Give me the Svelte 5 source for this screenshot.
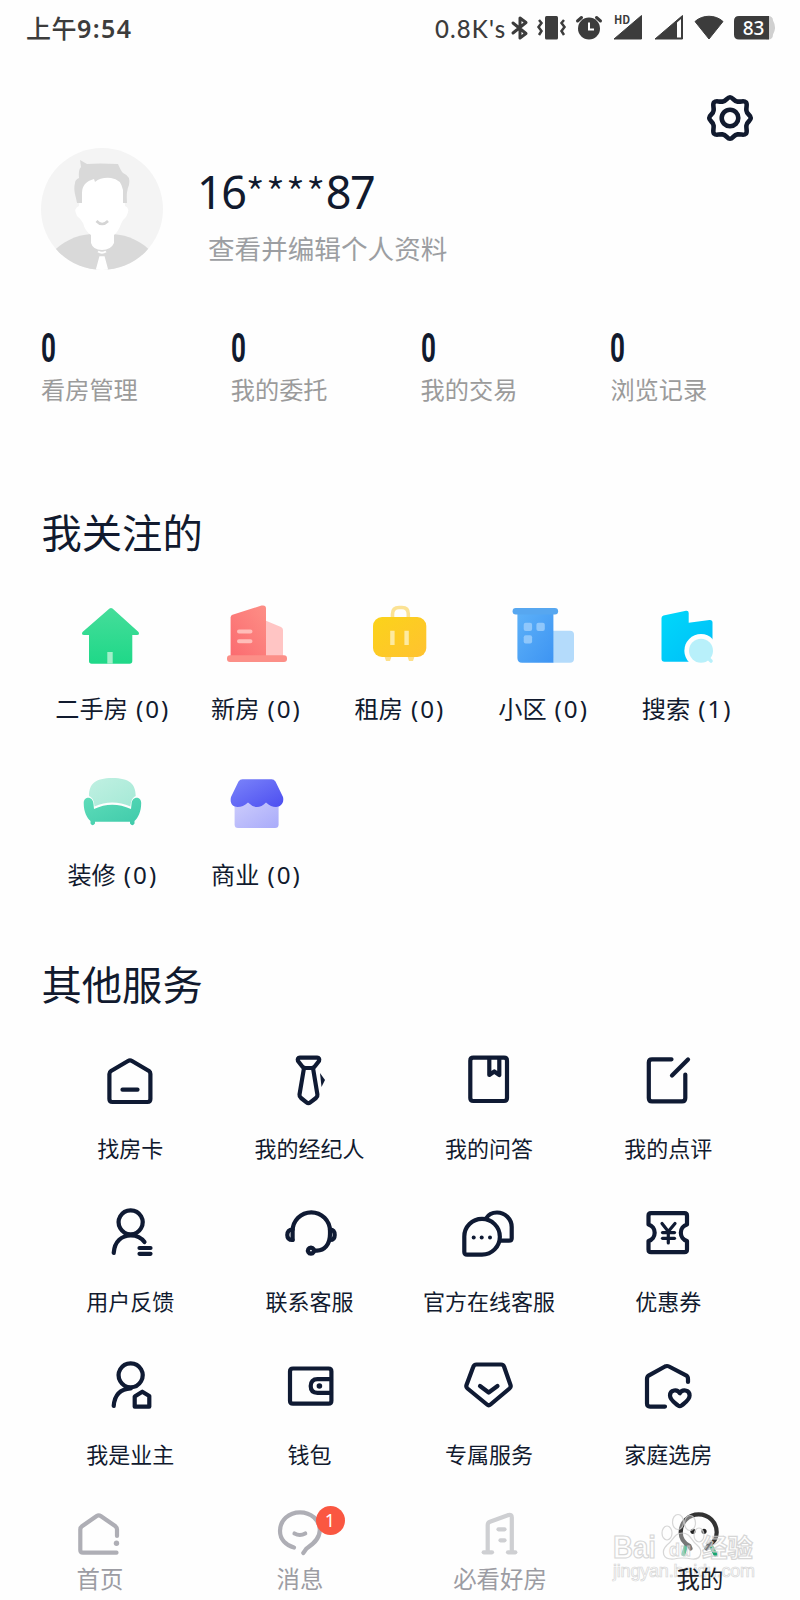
<script>
    const stats = [
        { count: 0, label: '看房管理' },
        { count: 0, label: '我的委托' },
        { count: 0, label: '我的交易' },
        { count: 0, label: '浏览记录' }
    ];

    const follows = [
        { icon: 'house', label: '二手房', count: 0 },
        { icon: 'tower', label: '新房', count: 0 },
        { icon: 'suitcase', label: '租房', count: 0 },
        { icon: 'block', label: '小区', count: 0 },
        { icon: 'search', label: '搜索', count: 1 },
        { icon: 'sofa', label: '装修', count: 0 },
        { icon: 'shop', label: '商业', count: 0 }
    ];

    // line icons on a 60x60 board, dots are [cx, cy, r]
    const services = [
        {
            label: '找房卡',
            paths: ['M11 20 L28 10 Q30 8.800 32 10 L49 20 Q50.400 21 50.400 23 V48 Q50.400 51 47.400 51 H12.400 Q9.400 51 9.400 48 V23 Q9.400 21 11 20 Z', 'M22.500 38.700 H37.500']
        },
        {
            label: '我的经纪人',
            paths: ['M20 6.700 H37 Q40 7 39 10 L35.500 14.500 Q34 17 31.500 17 H25.500 Q23 17 21.500 14.500 L18 10 Q17 7 20 6.700 Z', 'M24 17 L19.500 43.500 Q19.300 45.500 21 47 L26.500 51.300 Q28.400 52.800 30.300 51.300 L36 47 Q37.700 45.500 37.400 43.500 L33 17'],
            fill: 'M40 22 L45 29 L41.500 36 Z'
        },
        {
            label: '我的问答',
            paths: ['M14.300 6.700 H45 Q48 6.700 48 9.700 V47 Q48 50 45 50 H14.300 Q11.300 50 11.300 47 V9.700 Q11.300 6.700 14.300 6.700 Z', 'M30.300 7 V24 L35.300 20.500 L40.300 24 V7']
        },
        {
            label: '我的点评',
            paths: ['M33.500 8.300 H14 Q10.800 8.300 10.800 11.500 V47 Q10.800 50.400 14 50.400 H44 Q47.300 50.400 47.300 47 V23.500', 'M50 8.500 L34 24.500']
        },
        {
            label: '用户反馈',
            paths: ['M30.700 6.300 A12 12 0 1 1 30.600 6.300 Z', 'M13.700 49 C14.500 37 22 31.500 30.700 31.500 C37 31.500 42 34.500 44.500 38', 'M39.500 44 H50.500', 'M39.500 49.800 H50.500']
        },
        {
            label: '联系客服',
            paths: ['M12.600 36 V27 A18.700 18.700 0 0 1 50 27 V30 C50 41 44 46.500 37 46.600 H34.500', 'M12.600 25.500 Q7.300 25.500 7.300 31 Q7.300 36 12.600 36', 'M50 25.500 Q54.700 25.500 54.700 31 Q54.700 36 50 36', 'M31 43.600 A3 3 0 1 1 30.900 43.600 Z']
        },
        {
            label: '官方在线客服',
            paths: ['M23 14.900 A17.700 17.700 0 0 1 23 50.600 H8 Q5.300 50.600 5.300 48 V32.600 A17.700 17.700 0 0 1 23 14.900 Z', 'M27 14.500 C29 11 33.500 8.500 38 8.500 C46 8.500 52.700 15 52.700 23 V34.200 Q52.700 36.700 50 36.700 H42'],
            dots: [[14.7, 33.6, 2], [22.7, 33.6, 2], [31, 33.6, 2]]
        },
        {
            label: '优惠券',
            paths: ['M13 9.200 H46.500 Q49 9.200 49 11.700 V20.500 A8.600 8.600 0 0 0 49 37 V45.500 Q49 48.200 46.500 48.200 H13 Q10.500 48.200 10.500 45.500 V37 A8.600 8.600 0 0 0 10.500 20.500 V11.700 Q10.500 9.200 13 9.200 Z'],
            thin: ['M24 19.500 L30.300 27.500 L37 19.500', 'M30.300 27.500 V39', 'M24.500 28.600 H36.500', 'M24.500 34.300 H36.500']
        },
        {
            label: '我是业主',
            paths: ['M30.700 6.300 A12 12 0 1 1 30.600 6.300 Z', 'M13.700 49 C14.500 38.500 20 32 30.700 31.500', 'M35.500 39 L42.300 34.700 L49.300 39 V49.700 H34.700 V39.600 Z']
        },
        {
            label: '钱包',
            paths: ['M13 11.500 H48.500 Q51.400 11.500 51.400 14.500 V43.700 Q51.400 46.700 48.500 46.700 H13 Q10 46.700 10 43.700 V14.500 Q10 11.500 13 11.500 Z', 'M51 22.200 H37.500 Q30.700 22.200 30.700 29 Q30.700 35.800 37.500 35.800 H51'],
            dots: [[39.4, 29, 2.8]]
        },
        {
            label: '专属服务',
            paths: ['M17.500 7.500 H42 Q44.500 7.500 45.200 10 L51.500 28 Q52.200 30 50.500 31.500 L31.500 47.500 Q29.700 49 28 47.500 L8.500 31.500 Q6.800 30 7.500 28 L14.200 10 Q15 7.500 17.500 7.500 Z', 'M21 29 L29.700 35.500 L38.500 29']
        },
        {
            label: '家庭选房',
            paths: ['M50 25 V22 Q50 19.500 48 18.300 L31 9.500 Q29 8.500 27 9.500 L11 18.300 Q9 19.500 9 22 V46.600 Q9 49.600 12 49.600 H27', 'M41.800 36.200 C39.500 32 32 32.500 32 38.500 C32 43 37 46 40 48.500 Q41.800 49.600 43.600 48.500 C46.600 46 51.600 43 51.600 38.500 C51.600 32.500 44 32 41.800 36.200 Z']
        }
    ];

    const tabs = [
        {
            label: '首页',
            tone: 'idle',
            paths: ['M42 26 V19.500 Q42 17.500 40.500 16.300 L25.700 6 Q23.700 4.700 21.700 6 L7 16.300 Q5.300 17.500 5.300 19.500 V40 Q5.300 42.700 8 42.700 H41.500'],
            dots: [[41.5, 33.3, 2.7]]
        },
        {
            label: '消息',
            tone: 'idle',
            badge: 1,
            paths: ['M19 37.500 C11 35.500 5 29.500 5 21 C5 10 14 2.300 25 2.300 C36 2.300 44.800 10 44.800 20 C44.800 30 36 35.500 31.500 38.500 L28.300 43', 'M19.500 23.500 Q24.800 26.500 30.200 23.500']
        },
        {
            label: '必看好房',
            tone: 'light',
            paths: ['M8.700 42.300 H17', 'M12.700 42 V15 Q12.700 12.500 15 11.700 L33.500 5 Q36.800 4.300 36.800 7.500 V42', 'M33 42.300 H40.300', 'M23.500 19.300 H29.500', 'M25.500 30.300 H29.500']
        },
        {
            label: '我的',
            tone: 'active',
            paths: ['M15.500 38.500 L14.500 36 C8.500 33 5.700 28 5.700 22.300 A18 18 0 0 1 41.700 22.300 C41.700 28 39 33 33 36 L31.500 38.500'],
            green: ['M10.500 37 L8.500 44', 'M36.500 37 L40.500 44.500'],
            dots: [[18, 21.3, 2.6], [29, 21.3, 2.6]]
        }
    ];
</script>

{#snippet followIcon(name)}
    <svg class="follow-icon" viewBox="0 0 64 64">
        {#if name === 'house'}
            <path d="M28.500 4.600 Q30 3.400 31.500 4.600 L57.500 28 Q59 30.800 56 31 H51.300 V57 Q51.300 59.700 48.600 59.700 H10.700 Q8 59.700 8 57 V31 H3 Q0 30.800 1.500 28 Z" fill="url(#g-green)" />
            <path d="M26.300 48 H31.700 V59.700 H26.300 Z" fill="#a2efc9" />
        {:else if name === 'tower'}
            <path d="M42 16.700 L57 23 Q59 24 59 26 V52 H42 Z" fill="#ffc5c4" />
            <path d="M6.600 52 V13.500 Q6.600 11.500 8.500 10.800 L37.500 1.600 Q42 .6 42 4.600 V52 Z" fill="url(#g-red)" />
            <rect x="3" y="51.300" width="60" height="6.600" rx="3" fill="#fc8f88" />
            <path d="M15 27.500 H26.500 M15 37.200 H26.500" stroke="#ffbdb9" stroke-width="4" stroke-linecap="round" />
        {:else if name === 'suitcase'}
            <path d="M24.500 14 V10 Q24.500 3.500 31 3.500 H34 Q40.300 3.500 40.300 10 V14" fill="none" stroke="#fbe294" stroke-width="3.600" />
            <path d="M16 51 H24 L22 57 H18 Z M39 51 H47 L45 57 H41 Z" fill="#fde08a" />
            <rect x="5" y="13" width="53.300" height="40" rx="9" fill="url(#g-yellow)" />
            <path d="M24.400 26.700 V41 M38.600 26.700 V41" stroke="#fdeaa0" stroke-width="4.400" />
        {:else if name === 'block'}
            <path d="M41 26.700 H58 Q62 26.700 62 30.500 V55 Q62 58.700 58 58.700 H41 Z" fill="#b4dbfb" />
            <path d="M5.400 8 H41.400 V58.700 H10 Q5.400 58.700 5.400 54 Z" fill="url(#g-blue)" />
            <rect x=".6" y="4" width="45.500" height="6.400" rx="3.200" fill="#57a7f0" />
            <g fill="#8fc7fb">
                <rect x="11.700" y="18.700" width="8.400" height="8.200" rx="2" />
                <rect x="24.400" y="18.700" width="8.400" height="8.200" rx="2" />
                <rect x="11.700" y="31.300" width="8.400" height="8.200" rx="2" />
            </g>
        {:else if name === 'search'}
            <path d="M6.500 14 Q6.500 12 8.500 11.400 L31 6.800 Q33.700 6.500 33.700 9 V18.700 L54.500 16 Q57.500 15.800 57.500 18.500 V57.700 H9.500 Q6.500 57.700 6.500 54.700 Z" fill="url(#g-cyan)" />
            <path d="M46 30 A16.600 16.600 0 1 0 46 63.300 H60 V38 L57.500 35 Q53 30 46 30 Z" fill="#fefefe" />
            <circle cx="46" cy="46.700" r="12" fill="#b8f0fa" />
            <path d="M52 53 L56 57" stroke="#b8f0fa" stroke-width="3.600" stroke-linecap="round" />
        {:else if name === 'sofa'}
            <path d="M8 26 C8 14 14 8 31.300 8 C48.600 8 54.700 14 54.700 26 C51 28 50 31 49.500 36.500 Q31 28.500 13.500 36.500 C13 31 12 28 8 26 Z" fill="url(#g-mint)" />
            <path d="M2.700 33 C2.700 26 12 25.500 12.500 34 L13 39 Q31 30.500 50 39 L50.500 34 C51 25.500 60.200 26 60.200 33 C60.200 42 57 48 53.500 51 V53.500 Q51.500 57 49 53.500 V51.700 H14 V53.500 Q11.500 57 9.500 53.500 V51 C6 48 2.700 42 2.700 33 Z" fill="url(#g-teal)" />
        {:else if name === 'shop'}
            <path d="M10.600 30 H54.600 V54.500 Q54.600 58 51 58 H14 Q10.600 58 10.600 54.500 Z" fill="url(#g-lilac)" />
            <path d="M18.500 9.300 H47.500 Q50 9.300 51.500 11.500 L59 27 C60.500 34 56 37 52 37 Q47 37 42 32.500 Q37.500 37 33 37 Q28.500 37 24 32.500 Q19 37 13.500 37 C9 37 5.500 34 7 27 L14.500 11.500 Q16 9.300 18.500 9.300 Z" fill="url(#g-violet)" />
        {/if}
    </svg>
{/snippet}

<!-- gradients shared by the coloured icons -->
<svg class="defs" width="0" height="0">
    <defs>
        <linearGradient id="g-green" x1="0" y1="0" x2="0" y2="1"><stop offset="0" stop-color="#45dd9a" /><stop offset="1" stop-color="#1fd888" /></linearGradient>
        <linearGradient id="g-red" x1="1" y1="0" x2="0" y2="1"><stop offset="0" stop-color="#fd8f86" /><stop offset="1" stop-color="#fb6b70" /></linearGradient>
        <linearGradient id="g-yellow" x1="0" y1="0" x2="1" y2="1"><stop offset="0" stop-color="#fbd31a" /><stop offset="1" stop-color="#ffc230" /></linearGradient>
        <linearGradient id="g-blue" x1="0" y1="0" x2="1" y2="1"><stop offset="0" stop-color="#5db1f8" /><stop offset="1" stop-color="#3d94f3" /></linearGradient>
        <linearGradient id="g-cyan" x1="0" y1="0" x2="1" y2="1"><stop offset="0" stop-color="#00d8fa" /><stop offset="1" stop-color="#00bdf8" /></linearGradient>
        <linearGradient id="g-mint" x1="0" y1="0" x2="1" y2="1"><stop offset="0" stop-color="#c0f0e2" /><stop offset="1" stop-color="#a5e9d6" /></linearGradient>
        <linearGradient id="g-teal" x1="0" y1="0" x2="1" y2="1"><stop offset="0" stop-color="#5edcb9" /><stop offset="1" stop-color="#3fcaaa" /></linearGradient>
        <linearGradient id="g-lilac" x1="0" y1="0" x2="1" y2="1"><stop offset="0" stop-color="#cdcdfc" /><stop offset="1" stop-color="#a9abfa" /></linearGradient>
        <linearGradient id="g-violet" x1="0" y1="0" x2="1" y2="1"><stop offset="0" stop-color="#7b84fa" /><stop offset="1" stop-color="#4c4ef0" /></linearGradient>
    </defs>
</svg>

<div class="screen">
    <header class="status">
        <span class="time">上午<span class="clock">9:54</span></span>
        <span class="speed">0.8K's</span>
        <svg class="status-icons" viewBox="0 0 268 28">
            <path d="M3 9 L16 19.500 L10 24 V4 L16 8.500 L3 19" fill="none" stroke="#3c3c3c" stroke-width="3" stroke-linejoin="round" stroke-linecap="round" />
            <rect x="35" y="2" width="13" height="23.500" rx="1.500" fill="#3c3c3c" />
            <path d="M29 6 L31.500 9 L28.500 13 L31.500 17 L29 21 M54 6 L51.500 9 L54.500 13 L51.500 17 L54 21" fill="none" stroke="#3c3c3c" stroke-width="2.500" />
            <circle cx="79" cy="14.500" r="11" fill="#3c3c3c" />
            <path d="M67.500 7 L71.500 3.500 M86.500 3.500 L90.500 7" stroke="#3c3c3c" stroke-width="3" stroke-linecap="round" />
            <path d="M79 8.500 V15.500 H84" fill="none" stroke="#fff" stroke-width="2" />
            <path d="M104 25 L131.500 1.500 V25 Z" fill="#3c3c3c" stroke="#3c3c3c" stroke-linejoin="round" />
            <text x="104" y="9.500" font-size="11" font-weight="700" fill="#3c3c3c">HD</text>
            <path d="M145 25 L172.500 1.500 V25 Z" fill="#3c3c3c" stroke="#3c3c3c" stroke-linejoin="round" />
            <path d="M167 8.500 L171 5 V23.500 H167 Z" fill="#fff" />
            <path d="M185 7.500 C192.500 .5 205.500 .5 213 7.500 L199 25 Z" fill="#3c3c3c" stroke="#3c3c3c" stroke-linejoin="round" />
            <path d="M256 2 H258 Q263 2 263 6.500 Q267 13.500 263 20.500 Q263 25.500 258 25.500 H256 Z" fill="#d0d0d0" />
            <path d="M229 2 H259 V25.500 H229 Q224 25.500 224 20.500 V7 Q224 2 229 2 Z" fill="#3c3c3c" />
            <text class="level" x="243.500" y="20.500" font-size="19" font-weight="500" text-anchor="middle" fill="#fff">83</text>
        </svg>
    </header>

    <div class="toolbar">
        <svg class="gear" viewBox="0 0 48 48">
            <path d="M24 3.200 C27 3.200 27.500 7.200 31.500 7.600 C35.500 8 38 6.200 39.800 8.200 C41.800 10 40 12.500 40.400 16.500 C40.800 20.500 44.800 21 44.800 24 C44.800 27 40.800 27.500 40.400 31.500 C40 35.500 41.800 38 39.800 39.800 C38 41.800 35.500 40 31.500 40.400 C27.500 40.800 27 44.800 24 44.800 C21 44.800 20.500 40.800 16.500 40.400 C12.500 40 10 41.800 8.200 39.800 C6.200 38 8 35.500 7.600 31.500 C7.200 27.500 3.200 27 3.200 24 C3.200 21 7.200 20.500 7.600 16.500 C8 12.500 6.200 10 8.200 8.200 C10 6.200 12.500 8 16.500 7.600 C20.500 7.200 21 3.200 24 3.200 Z" />
            <circle cx="24" cy="24" r="8.300" />
        </svg>
    </div>

    <section class="profile">
        <svg class="avatar" viewBox="0 0 122 122">
            <clipPath id="avatar-clip"><circle cx="61" cy="61" r="61" /></clipPath>
            <g clip-path="url(#avatar-clip)">
                <rect width="122" height="122" fill="#f4f4f4" />
                <path d="M10 106 C20 94 35 87 50 86 H72 C87 87 103 94 112 106 V122 H10 Z" fill="#d9d9d9" />
                <path d="M40 32 Q60 20 82 32 L84 58 Q90 60 85 69 Q81 72 80 76 Q77 84 73 87 V95 Q70 102 61 102 Q52 102 50 95 V87 Q44 83 42 75 Q40 71 36 68 Q32 60 38 58 Z" fill="#fff" />
                <path d="M36 55 C35 48 32 43 34 35 Q34 32 38 30 Q37 22 40 19 L39 12 L46 16 Q58 15 77 16 Q80 23 82 25 Q90 28 88 37 Q85 43 86 55 H82 V42 Q80 31 70 30 Q60 29 54 34 L53 31 Q41 34 41 45 V55 Z" fill="#d9d9d9" />
                <path d="M55.500 73 Q61 79 67 73" fill="none" stroke="#d5d5d5" stroke-width="2.600" />
                <path d="M57 103.500 Q61 106 65 103.500" fill="none" stroke="#fff" stroke-width="2" />
                <path d="M55.500 122 L59 109 H63 L66.500 122 Z" fill="#fff" stroke="#fff" stroke-width="1.500" />
            </g>
        </svg>
        <div class="who">
            <div class="name"><span class="digits">16</span><span class="stars">****</span><span class="digits">87</span></div>
            <div class="edit">查看并编辑个人资料</div>
        </div>
    </section>

    <section class="stats">
        {#each stats as s}
            <div class="stat">
                <span class="num">{s.count}</span>
                <span class="stat-label">{s.label}</span>
            </div>
        {/each}
    </section>

    <h2 class="follow-title">我关注的</h2>
    <section class="follows">
        {#each follows as f}
            <div class="follow">
                {@render followIcon(f.icon)}
                <div class="follow-label">{f.label}<span class="count">({f.count})</span></div>
            </div>
        {/each}
    </section>

    <h2 class="service-title">其他服务</h2>
    <section class="services">
        {#each services as s}
            <div class="service">
                <svg class="line-icon" viewBox="0 0 60 60">
                    {#each s.paths as d}
                        <path {d} />
                    {/each}
                    {#each s.thin ?? [] as d}
                        <path class="thin" {d} />
                    {/each}
                    {#if s.fill}
                        <path class="solid" d={s.fill} />
                    {/if}
                    {#each s.dots ?? [] as [cx, cy, r]}
                        <circle class="solid" {cx} {cy} {r} />
                    {/each}
                </svg>
                <div class="service-label">{s.label}</div>
            </div>
        {/each}
    </section>

    <nav class="tabs">
        {#each tabs as t}
            <div class="tab {t.tone}">
                <div class="tab-icon">
                    <svg viewBox="0 0 50 50">
                        {#each t.green ?? [] as d}
                            <path class="green" {d} />
                        {/each}
                        {#each t.paths as d}
                            <path {d} />
                        {/each}
                        {#each t.dots ?? [] as [cx, cy, r]}
                            <circle class="solid" {cx} {cy} {r} />
                        {/each}
                    </svg>
                    {#if t.badge}
                        <span class="badge">{t.badge}</span>
                    {/if}
                </div>
                <div class="tab-label">{t.label}</div>
            </div>
        {/each}
    </nav>

    <svg class="watermark" viewBox="0 0 160 80">
        <g fill="#fff" fill-opacity=".4" stroke="#d0d0d0" stroke-width="1.200">
            <text class="wm-latin" x="13" y="48" font-size="31" font-weight="700" textLength="43" lengthAdjust="spacingAndGlyphs">Bai</text>
            <ellipse cx="67" cy="23" rx="5" ry="7" />
            <ellipse cx="78" cy="12" rx="5.500" ry="7.500" />
            <ellipse cx="90" cy="13" rx="5.500" ry="7.500" />
            <ellipse cx="99" cy="25" rx="5" ry="7" />
            <path d="M82 23 C91 23 91 31 97 35 C103 40 102 50 92 49 Q82 47 74 49 C62 50 61 41 67 35 C73 31 74 23 82 23 Z" />
            <text class="wm-latin" x="69" y="46" font-size="18" font-weight="700" stroke-width=".8">du</text>
            <text x="102" y="47" font-size="25.500" font-weight="700">经验</text>
            <text class="wm-latin" x="13" y="67" font-size="18" stroke-width=".7" textLength="142">jingyan.baidu.com</text>
        </g>
    </svg>
</div>

<style>
    :global(body) {
        background: #fefefe;
    }

    .screen {
        position: relative;
        width: 800px;
        height: 1600px;
        overflow: hidden;
        color: #111a2e;
        font-family: "Noto Sans CJK SC", sans-serif;
    }

    .defs {
        display: block;
    }

    .status {
        display: flex;
        align-items: center;
        height: 56px;
        padding: 0 22px 0 26px;
        color: #3c3c3c;
    }

    .time {
        flex: 1;
        font-size: 25px;
        font-weight: 500;
        line-height: 34px;
        padding-bottom: 2px;
        letter-spacing: 0.5px;
    }

    .clock {
        font-family: "Noto Sans", sans-serif;
        font-weight: 600;
        letter-spacing: 1.4px;
    }

    .speed {
        width: 75px;
        font-family: Lato, sans-serif;
        font-size: 24px;
        font-weight: 500;
        letter-spacing: 1.1px;
        white-space: nowrap;
    }

    .status-icons {
        width: 268px;
        height: 28px;
        overflow: visible;
    }

    .level {
        font-family: "Noto Sans", sans-serif;
    }

    .toolbar {
        display: flex;
        justify-content: flex-end;
        padding: 38px 46px 6px 0;
    }

    .gear {
        width: 48px;
        height: 48px;
        fill: none;
        stroke: #111a2e;
        stroke-width: 4.6;
    }

    .profile {
        display: flex;
        height: 122px;
        padding-left: 41px;
    }

    .avatar {
        width: 122px;
        height: 122px;
    }

    .who {
        padding: 12px 0 0 34px;
    }

    .name {
        font-size: 45px;
        line-height: 60px;
        white-space: nowrap;
    }

    .digits {
        font-family: "Noto Sans", sans-serif;
        letter-spacing: -1.6px;
    }

    .stars {
        position: relative;
        top: 3px;
        font-weight: 300;
        letter-spacing: 0.2px;
    }

    .edit {
        padding: 6px 0 0 11px;
        font-size: 26.6px;
        line-height: 40px;
        color: #9c9ea2;
    }

    .stats {
        display: grid;
        grid-template-columns: repeat(4, 189.8px);
        padding: 59px 0 0 41px;
    }

    .stat {
        display: flex;
        flex-direction: column;
    }

    .num {
        font-family: Roboto, sans-serif;
        font-size: 40px;
        font-weight: 700;
        line-height: 40px;
        transform: scaleX(0.65);
        transform-origin: 0 50%;
    }

    .stat-label {
        margin-top: 2px;
        font-size: 24.2px;
        line-height: 36px;
        color: #9b9b9b;
    }

    h2 {
        margin: 0;
        padding-left: 41.5px;
        font-size: 40.3px;
        font-weight: 400;
        line-height: 60px;
    }

    .follow-title {
        margin-top: 93.5px;
    }

    .follows {
        display: grid;
        grid-template-columns: repeat(5, 143.6px);
        grid-auto-rows: 166px;
        padding: 43px 0 0 41px;
    }

    .follow {
        display: flex;
        flex-direction: column;
        align-items: center;
    }

    .follow-icon {
        width: 64px;
        height: 64px;
    }

    .follow-label {
        margin-top: 22px;
        font-size: 24.2px;
        line-height: 36px;
        white-space: nowrap;
    }

    .count {
        margin-left: 8px;
        font-family: "Noto Sans", sans-serif;
        letter-spacing: 2px;
    }

    .service-title {
        margin-top: 17px;
    }

    .services {
        display: grid;
        grid-template-columns: repeat(4, 179.4px);
        grid-auto-rows: 152.8px;
        padding: 38.5px 0 0 40.5px;
    }

    .service {
        display: flex;
        flex-direction: column;
        align-items: center;
    }

    .line-icon {
        width: 60px;
        height: 60px;
        fill: none;
        stroke: #0f1a33;
        stroke-width: 4.2;
        stroke-linecap: round;
        stroke-linejoin: round;
    }

    .line-icon .thin {
        stroke-width: 3.2;
    }

    .line-icon .solid {
        fill: #0f1a33;
        stroke: none;
    }

    .service-label {
        margin-top: 19px;
        font-size: 22px;
        line-height: 34px;
        white-space: nowrap;
    }

    .tabs {
        display: grid;
        grid-template-columns: repeat(4, 1fr);
        margin-top: 0.5px;
    }

    .tab {
        display: flex;
        flex-direction: column;
        align-items: center;
        color: #9c9ca3;
    }

    .tab-icon {
        position: relative;
        width: 50px;
        height: 50px;
    }

    .tab-icon svg {
        display: block;
        width: 50px;
        height: 50px;
        fill: none;
        stroke: #aeaeb5;
        stroke-width: 4.2;
        stroke-linecap: round;
        stroke-linejoin: round;
    }

    .tab-icon .solid {
        fill: #aeaeb5;
        stroke: none;
    }

    .light .tab-icon svg {
        stroke: #cecfd2;
    }

    .active {
        color: #1a1d28;
    }

    .active .tab-icon svg {
        stroke: #333333;
    }

    .active .tab-icon .solid {
        fill: #222222;
    }

    .tab-icon .green {
        stroke: #17a56b;
    }

    .badge {
        position: absolute;
        top: -4px;
        left: 40.5px;
        width: 29px;
        height: 29px;
        border-radius: 50%;
        background: #fa5741;
        color: #fff;
        font-family: "Noto Sans", sans-serif;
        font-size: 18px;
        line-height: 29px;
        text-align: center;
    }

    .tab-label {
        position: relative;
        z-index: 1;
        font-size: 23.4px;
        line-height: 36px;
    }

    .watermark {
        position: absolute;
        left: 600px;
        top: 1510px;
        width: 160px;
        height: 80px;
        opacity: 0.85;
    }

    .wm-latin {
        font-family: "Liberation Sans", sans-serif;
    }
</style>
